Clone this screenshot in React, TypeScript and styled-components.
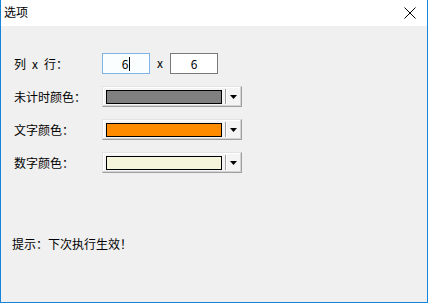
import { Fragment } from "react";
import styled, { createGlobalStyle } from "styled-components";

const GlobalStyle = createGlobalStyle`
  html, body {
    margin: 0;
    padding: 0;
    background: #ffffff;
  }
  body {
    font-family: "Noto Sans CJK SC", "DejaVu Sans", sans-serif;
    font-size: 12px;
    color: #000;
  }
`;

const Window = styled.div`
  width: 428px;
  height: 303px;
  box-sizing: border-box;
  border: 1px solid #1883d7;
  border-top: none;
  display: flex;
  flex-direction: column;
  background: #ffffff;
`;

const TitleBar = styled.div`
  height: 26px;
  display: flex;
  align-items: center;
  justify-content: space-between;
  padding: 0 0 0 3px;
  background: #ffffff;
`;

const Title = styled.div`
  font-size: 12px;
  line-height: 16px;
  margin-top: -2px;
`;

const CloseBox = styled.div`
  width: 46px;
  height: 26px;
  display: flex;
  align-items: center;
  justify-content: center;
  margin-right: -6px;
`;

const Client = styled.div`
  flex: 1;
  background: #f0f0f0;
  padding: 27px 0 0 13px;
  display: flex;
  flex-direction: column;
`;

const Form = styled.div`
  display: grid;
  grid-template-columns: 88px auto;
  grid-auto-rows: 21px;
  row-gap: 12px;
  align-items: center;
`;

const Label = styled.div`
  font-size: 12px;
  line-height: 16px;
  white-space: pre;
`;

const SizeRow = styled.div`
  display: flex;
  align-items: center;
`;

const NumBox = styled.div<{ $focused?: boolean }>`
  width: 48px;
  height: 21px;
  box-sizing: border-box;
  border: 1px solid ${(p) => (p.$focused ? "#7eb4ea" : "#7a7a7a")};
  background: ${(p) => (p.$focused ? "#fbfeff" : "#ffffff")};
  display: flex;
  align-items: center;
  justify-content: center;
  font-size: 12px;
  line-height: 14px;
`;

const Caret = styled.span`
  display: inline-block;
  width: 1px;
  height: 14px;
  background: #000;
  margin-left: 1px;
`;

const Times = styled.div`
  width: 20px;
  text-align: center;
  font-size: 12px;
  line-height: 14px;
  margin-top: -2px;
`;

const Combo = styled.div`
  width: 140px;
  height: 21px;
  box-sizing: border-box;
  border-top: 1px solid #e3e3e3;
  border-left: 1px solid #e3e3e3;
  border-right: 1px solid #a0a0a0;
  border-bottom: 1px solid #a0a0a0;
  box-shadow: inset -1px -1px 0 #d4d4d4, inset 1px 1px 0 #ffffff;
  background: #f4f4f4;
  display: flex;
  align-items: center;
  padding: 0 0 0 3px;
`;

const Swatch = styled.div<{ $color: string }>`
  width: 116px;
  height: 14px;
  box-sizing: border-box;
  border: 1px solid #000;
  background: ${(p) => p.$color};
`;

const ArrowBtn = styled.div`
  flex: 1;
  height: 15px;
  display: flex;
  align-items: center;
  justify-content: center;
  margin-left: 3px;
  border-left: 1px solid #a0a0a0;
  box-shadow: inset 1px 0 0 #ffffff;
`;

const Hint = styled.div`
  margin-top: 63px;
  margin-left: -2px;
  font-size: 12px;
  line-height: 16px;
`;

function Arrow() {
  return (
    <svg width="7" height="4" viewBox="0 0 7 4">
      <path d="M0 0 H7 L3.5 4 Z" fill="#000" />
    </svg>
  );
}

const colors = [
  { label: "未计时颜色：", color: "#808080" },
  { label: "文字颜色：", color: "#ff8c00" },
  { label: "数字颜色：", color: "#f5f5dc" },
];

export default function App() {
  return (
    <>
      <GlobalStyle />
      <Window>
        <TitleBar>
          <Title>选项</Title>
          <CloseBox>
            <svg width="12" height="12" viewBox="0 0 12 12">
              <path d="M0.5 0.5 L11.5 11.5 M11.5 0.5 L0.5 11.5" stroke="#000" strokeWidth="1" />
            </svg>
          </CloseBox>
        </TitleBar>
        <Client>
          <Form>
            <Label>{"列\u2002x\u2002行："}</Label>
            <SizeRow>
              <NumBox $focused>
                6<Caret />
              </NumBox>
              <Times>x</Times>
              <NumBox>6</NumBox>
            </SizeRow>
            {colors.map((c) => (
              <Fragment key={c.label}>
                <Label>{c.label}</Label>
                <Combo>
                  <Swatch $color={c.color} />
                  <ArrowBtn>
                    <Arrow />
                  </ArrowBtn>
                </Combo>
              </Fragment>
            ))}
          </Form>
          <Hint>提示：下次执行生效！</Hint>
        </Client>
      </Window>
    </>
  );
}
